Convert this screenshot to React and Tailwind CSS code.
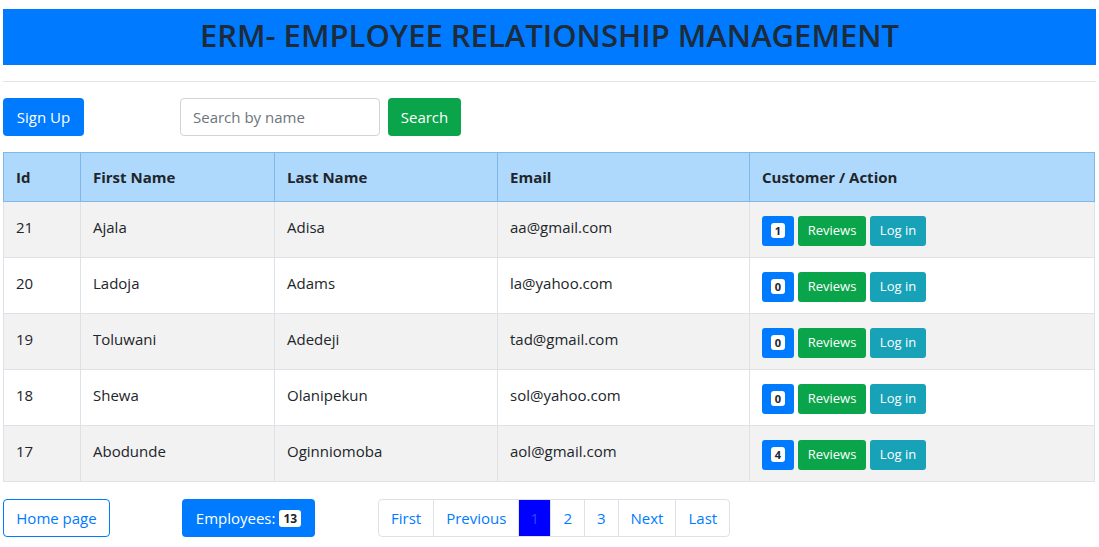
import React from 'react';

const rows = [
  { id: 21, first: 'Ajala', last: 'Adisa', email: 'aa@gmail.com', count: 1 },
  { id: 20, first: 'Ladoja', last: 'Adams', email: 'la@yahoo.com', count: 0 },
  { id: 19, first: 'Toluwani', last: 'Adedeji', email: 'tad@gmail.com', count: 0 },
  { id: 18, first: 'Shewa', last: 'Olanipekun', email: 'sol@yahoo.com', count: 0 },
  { id: 17, first: 'Abodunde', last: 'Oginniomoba', email: 'aol@gmail.com', count: 4 },
];

const pages = ['First', 'Previous', '1', '2', '3', 'Next', 'Last'];

export default function App() {
  return (
    <div className="px-[3px] pt-[9px] w-[1099px] bg-white text-[#212529]" style={{ fontFamily: '"Open Sans", sans-serif' }}>
      <div className="h-[56px] bg-[#007bff] flex items-center justify-center">
        <h1 className="text-[31px] font-semibold leading-[40px] mb-[4px] text-[#1d2b3a]">ERM- EMPLOYEE RELATIONSHIP MANAGEMENT</h1>
      </div>
      <hr className="mt-[16px] border-t border-[#e3e3e3]" />

      <div className="flex items-center mt-[16px] h-[38px]">
        <button className="h-[38px] w-[81px] rounded-[4px] bg-[#007bff] text-white text-[15px]">Sign Up</button>
        <input
          placeholder="Search by name"
          className="ml-[96px] h-[38px] w-[200px] rounded-[4px] border border-[#ced4da] px-[12px] text-[15px] placeholder:text-[#6c757d] outline-none"
        />
        <button className="ml-[8px] h-[38px] w-[73px] rounded-[4px] bg-[#0aa54a] text-white text-[15px]">Search</button>
      </div>

      <table className="mt-[16px] w-[1092px] border-collapse text-[15px]">
        <thead>
          <tr className="bg-[#aed9fd] h-[49px]">
            <th className="w-[77px] border border-[#7fb8e8] px-[12px] text-left font-bold">Id</th>
            <th className="w-[194px] border border-[#7fb8e8] px-[12px] text-left font-bold">First Name</th>
            <th className="w-[223px] border border-[#7fb8e8] px-[12px] text-left font-bold">Last Name</th>
            <th className="w-[252px] border border-[#7fb8e8] px-[12px] text-left font-bold">Email</th>
            <th className="border border-[#7fb8e8] px-[12px] text-left font-bold">Customer / Action</th>
          </tr>
        </thead>
        <tbody>
          {rows.map((r, i) => (
            <tr key={r.id} className={`h-[56px] ${i % 2 === 0 ? 'bg-[#f2f2f2]' : 'bg-white'}`}>
              <td className="border border-[#dee2e6] px-[12px] pb-[4px]">{r.id}</td>
              <td className="border border-[#dee2e6] px-[12px] pb-[4px]">{r.first}</td>
              <td className="border border-[#dee2e6] px-[12px] pb-[4px]">{r.last}</td>
              <td className="border border-[#dee2e6] px-[12px] pb-[4px]">{r.email}</td>
              <td className="border border-[#dee2e6] px-[12px] pt-[2px]">
                <div className="flex items-center gap-[4px]">
                  <span className="h-[30px] w-[32px] rounded-[3px] bg-[#007bff] flex items-center justify-center">
                    <span className="bg-white text-[#212529] text-[11px] font-bold rounded-[3px] px-[4px] leading-[15px]">{r.count}</span>
                  </span>
                  <button className="h-[30px] w-[68px] rounded-[3px] bg-[#0aa54a] text-white text-[13px]">Reviews</button>
                  <button className="h-[30px] w-[56px] rounded-[3px] bg-[#17a2b8] text-white text-[13px]">Log in</button>
                </div>
              </td>
            </tr>
          ))}
        </tbody>
      </table>

      <div className="flex items-center mt-[17px] h-[38px]">
        <button className="h-[38px] w-[107px] rounded-[4px] border border-[#007bff] text-[#007bff] text-[15px]">Home page</button>
        <button className="ml-[72px] h-[38px] w-[133px] rounded-[4px] bg-[#007bff] text-white text-[15px] flex items-center justify-center gap-[4px]">
          Employees:
          <span className="bg-white text-[#212529] text-[12px] font-bold rounded-[3px] px-[4px] leading-[17px]">13</span>
        </button>
        <div className="ml-[63px] flex h-[38px] rounded-[4px] border border-[#dee2e6] overflow-hidden">
          {pages.map((p, i) => (
            <span
              key={p}
              className={`flex items-center justify-center text-[15px] ${i > 0 ? 'border-l border-[#dee2e6]' : ''} ${p === '1' ? 'bg-[#0000ff] text-[#2a4dff] w-[32px]' : 'text-[#007bff] px-[12px]'}`}
            >
              {p}
            </span>
          ))}
        </div>
      </div>
      <div className="h-[10px]" />
    </div>
  );
}
